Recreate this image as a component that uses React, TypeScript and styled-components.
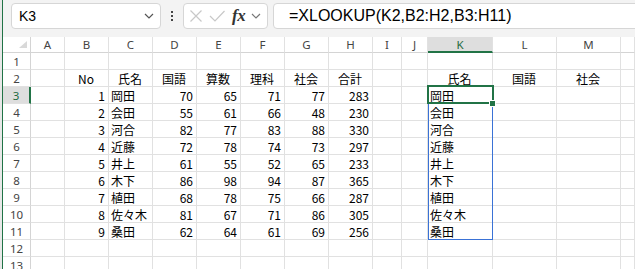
import React from "react";
import styled, { createGlobalStyle } from "styled-components";

const GlobalStyle = createGlobalStyle`
  html, body { margin: 0; padding: 0; background: #f3f3f3; }
  #root { width: 635px; height: 269px; overflow: hidden; }
`;

type Align = "left" | "center" | "right";
type CellValue = { text: string; align: Align };

const COLUMNS = ["A", "B", "C", "D", "E", "F", "G", "H", "I", "J", "K", "L", "M"];
// last track is the partly visible column N, left without a label
const COLUMN_WIDTHS = "28px 34px 44px 44px 44px 44px 44px 44px 44px 29px 26px 65px 64px 64px 1fr";
const ROW_COUNT = 13;
const ACTIVE_COL = "K";
const ACTIVE_ROW = 3;

const students: [number, string, number, number, number, number, number][] = [
  [1, "岡田", 70, 65, 71, 77, 283],
  [2, "会田", 55, 61, 66, 48, 230],
  [3, "河合", 82, 77, 83, 88, 330],
  [4, "近藤", 72, 78, 74, 73, 297],
  [5, "井上", 61, 55, 52, 65, 233],
  [6, "木下", 86, 98, 94, 87, 365],
  [7, "植田", 68, 78, 75, 66, 287],
  [8, "佐々木", 81, 67, 71, 86, 305],
  [9, "桑田", 62, 64, 61, 69, 256],
];

const buildSheet = (): Record<string, CellValue> => {
  const sheet: Record<string, CellValue> = {};
  const headings = ["No", "氏名", "国語", "算数", "理科", "社会", "合計"];
  headings.forEach((h, i) => {
    sheet[`${COLUMNS[i + 1]}2`] = { text: h, align: "center" };
  });
  sheet["K2"] = { text: "氏名", align: "center" };
  sheet["L2"] = { text: "国語", align: "center" };
  sheet["M2"] = { text: "社会", align: "center" };
  students.forEach((row, r) => {
    row.forEach((v, i) => {
      sheet[`${COLUMNS[i + 1]}${r + 3}`] = {
        text: String(v),
        align: typeof v === "number" ? "right" : "left",
      };
    });
    sheet[`K${r + 3}`] = { text: row[1], align: "left" };
  });
  return sheet;
};

const SHEET = buildSheet();

const Window = styled.div`
  display: flex;
  width: 635px;
  height: 269px;
  overflow: hidden;
  background: #f3f3f3;
`;

const WindowEdge = styled.div`
  flex: 0 0 2px;
  border-right: 1px solid #217346;
  background: #e8e8e8;
`;

const Main = styled.div`
  flex: 1;
  display: flex;
  flex-direction: column;
  min-width: 0;
`;

const FormulaBar = styled.div`
  display: flex;
  align-items: center;
  height: 26px;
  padding: 3px 0 8px 8px;
`;

const InputBox = styled.div`
  height: 100%;
  box-sizing: border-box;
  border: 1px solid #d6d6d6;
  border-radius: 4px;
  background: #fff;
  display: flex;
  align-items: center;
`;

const NameBox = styled(InputBox)`
  width: 150px;
  padding: 0 6px 0 7px;
  justify-content: space-between;
  font: 14px "Liberation Sans", Arial, sans-serif;
  color: #000;
`;

const MoreDots = styled.div`
  width: 22px;
  display: flex;
  flex-direction: column;
  align-items: center;
  gap: 2px;
  span {
    width: 2px;
    height: 2px;
    background: #444;
  }
`;

const FxBox = styled(InputBox)`
  width: 85px;
  padding: 0 3px 0 5px;
  gap: 6px;
`;

const FxLabel = styled.span`
  font: italic bold 17px "Liberation Serif", "Times New Roman", serif;
  color: #333;
  margin-left: 1px;
  letter-spacing: -0.5px;
`;

const FormulaBox = styled(InputBox)`
  flex: 1;
  margin-left: 5px;
  margin-right: -10px;
  padding-left: 15px;
  font: 16px "Liberation Sans", Arial, sans-serif;
  color: #000;
  white-space: nowrap;
`;

const SheetWrap = styled.div`
  position: relative;
  flex: 1;
  background: #fff;
  overflow: hidden;
`;

const Grid = styled.div`
  display: grid;
  grid-template-columns: ${COLUMN_WIDTHS};
  grid-template-rows: 16px repeat(${ROW_COUNT}, 17px);
  font: 12px "Noto Sans CJK JP", "Liberation Sans", sans-serif;
  color: #000;
`;

const Cell = styled.div<{ $align: Align }>`
  box-sizing: border-box;
  border-right: 1px solid #e1e1e1;
  border-bottom: 1px solid #e1e1e1;
  display: flex;
  align-items: center;
  justify-content: ${({ $align }) =>
    $align === "right" ? "flex-end" : $align === "center" ? "center" : "flex-start"};
  padding: 1px 3px 0 2px;
  white-space: nowrap;
  overflow: visible;
  line-height: 1;
`;

const ColumnHeader = styled.div<{ $active?: boolean }>`
  box-sizing: border-box;
  display: flex;
  align-items: center;
  justify-content: center;
  font: 11.5px "Noto Sans", "Liberation Sans", sans-serif;
  color: ${({ $active }) => ($active ? "#1e6b41" : "#444")};
  background: ${({ $active }) => ($active ? "#dedede" : "#fff")};
  border-right: 1px solid #e1e1e1;
  border-bottom: ${({ $active }) => ($active ? "2px solid #217346" : "1px solid #d4d4d4")};
`;

const RowHeader = styled(ColumnHeader)`
  border-bottom: 1px solid #e1e1e1;
  border-right: ${({ $active }) => ($active ? "2px solid #217346" : "1px solid #d4d4d4")};
`;

const Corner = styled.div`
  position: relative;
  box-sizing: border-box;
  border-right: 1px solid #d4d4d4;
  border-bottom: 1px solid #d4d4d4;
  background: #fff;
`;

const CornerMark = styled.svg`
  position: absolute;
  right: 3px;
  bottom: 4px;
`;

const Selection = styled.div`
  position: absolute;
  left: 424px;
  top: 48px;
  width: 67px;
  height: 19px;
  box-sizing: border-box;
  border: 2px solid #217346;
`;

const FillHandle = styled.div`
  position: absolute;
  left: 486px;
  top: 63px;
  width: 7px;
  height: 7px;
  box-sizing: border-box;
  background: #217346;
  border: 1px solid #fff;
`;

const SpillRange = styled.div`
  position: absolute;
  left: 425px;
  top: 49px;
  width: 65px;
  height: 154px;
  box-sizing: border-box;
  border: 1px solid #3a72d6;
`;

const Chevron = ({ color = "#555" }: { color?: string }) => (
  <svg width="10" height="6" viewBox="0 0 10 6">
    <path d="M1 1 L5 5 L9 1" fill="none" stroke={color} strokeWidth="1.2" />
  </svg>
);

const CancelIcon = () => (
  <svg width="14" height="12" viewBox="0 0 14 12">
    <path d="M1.5 0.5 L12.5 11.5 M12.5 0.5 L1.5 11.5" stroke="#c8c8c8" strokeWidth="1.2" />
  </svg>
);

const EnterIcon = () => (
  <svg width="16" height="12" viewBox="0 0 16 12">
    <path d="M1 6 L6 11 L15.5 1" fill="none" stroke="#c8c8c8" strokeWidth="1.2" />
  </svg>
);

const App = () => {
  const rows = Array.from({ length: ROW_COUNT }, (_, i) => i + 1);

  return (
    <>
      <GlobalStyle />
      <Window>
        <WindowEdge />
        <Main>
          <FormulaBar>
            <NameBox>
              <span>K3</span>
              <Chevron />
            </NameBox>
            <MoreDots>
              <span />
              <span />
              <span />
            </MoreDots>
            <FxBox>
              <CancelIcon />
              <EnterIcon />
              <FxLabel>fx</FxLabel>
              <Chevron color="#777" />
            </FxBox>
            <FormulaBox>=XLOOKUP(K2,B2:H2,B3:H11)</FormulaBox>
          </FormulaBar>
          <SheetWrap>
            <Grid>
              <Corner>
                <CornerMark width="8" height="7" viewBox="0 0 8 7">
                  <path d="M8 0 L8 7 L0 7 Z" fill="#d9d9d9" />
                </CornerMark>
              </Corner>
              {COLUMNS.map((c) => (
                <ColumnHeader key={c} $active={c === ACTIVE_COL}>
                  {c}
                </ColumnHeader>
              ))}
              <ColumnHeader />
              {rows.map((r) => (
                <React.Fragment key={r}>
                  <RowHeader $active={r === ACTIVE_ROW}>{r}</RowHeader>
                  {COLUMNS.map((c) => {
                    const value = SHEET[`${c}${r}`];
                    return (
                      <Cell key={c} $align={value?.align ?? "left"}>
                        {value?.text}
                      </Cell>
                    );
                  })}
                  <Cell $align="left" />
                </React.Fragment>
              ))}
            </Grid>
            <SpillRange />
            <Selection />
            <FillHandle />
          </SheetWrap>
        </Main>
      </Window>
    </>
  );
};

export default App;
